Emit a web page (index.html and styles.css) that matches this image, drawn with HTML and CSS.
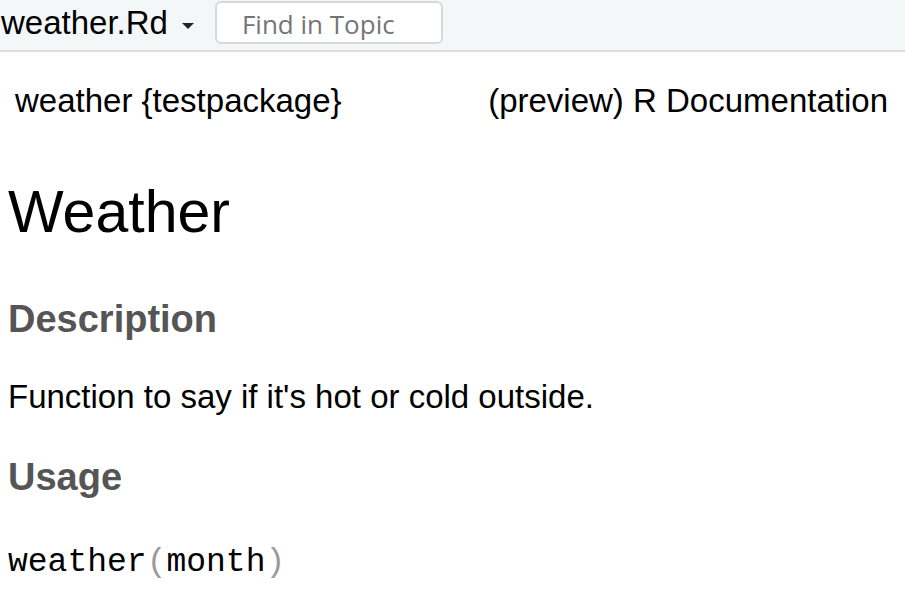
FILE: index.html
```html
<!DOCTYPE html>
<html>
<head>
<meta charset="utf-8">
<link rel="stylesheet" href="styles.css">
</head>
<body>
<div class="toolbar">
  <div class="topic">weather.Rd<span class="caret"></span></div>
  <div class="search">Find in Topic</div>
</div>
<div class="content">
  <div class="header">
    <span>weather {testpackage}</span>
    <span>(preview) R Documentation</span>
  </div>
  <h1>Weather</h1>
  <h3 class="desc">Description</h3>
  <p>Function to say if it's hot or cold outside.</p>
  <h3 class="usage">Usage</h3>
  <pre class="code">weather<span class="paren">(</span>month<span class="paren">)</span></pre>
</div>
</body>
</html>
```
FILE: styles.css
```css
html, body {
  margin: 0;
  padding: 0;
  background: #ffffff;
  font-family: "Liberation Sans", Arial, sans-serif;
  color: #000;
  overflow: hidden;
}
.toolbar {
  height: 50px;
  background: #f4f7f8;
  border-bottom: 2px solid #dcdfe1;
  display: flex;
  align-items: flex-start;
}
.topic {
  font-size: 33px;
  line-height: 38px;
  margin-top: 4px;
  padding-left: 1px;
  display: flex;
  align-items: flex-start;
}
.caret {
  display: block;
  width: 0;
  height: 0;
  border-left: 6px solid transparent;
  border-right: 6px solid transparent;
  border-top: 6px solid #222;
  margin-left: 14px;
  margin-top: 19px;
}
.search {
  margin-left: 21px;
  margin-top: 1px;
  width: 228px;
  height: 43px;
  background: #fff;
  border: 2px solid #d6d9db;
  border-radius: 6px;
  box-sizing: border-box;
  padding: 2px 0 0 25px;
  font-family: "Open Sans", "Noto Sans", sans-serif;
  font-size: 26px;
  color: #757575;
  line-height: 38px;
}
.content {
  padding: 0 8px;
}
.header {
  display: flex;
  justify-content: space-between;
  font-size: 33px;
  padding: 30px 9px 0 7px;
  line-height: 38px;
}
h1 {
  font-size: 59px;
  font-weight: normal;
  margin: 58px 0 0;
  line-height: 68px;
}
h3 {
  font-size: 38px;
  color: #555555;
  font-weight: bold;
  margin: 0;
  line-height: 44px;
}
h3.desc {
  margin-top: 51px;
}
p {
  font-size: 33px;
  line-height: 38px;
  margin: 37px 0 0;
}
h3.usage {
  margin-top: 39px;
}
.code {
  font-family: "Liberation Mono", "Courier New", monospace;
  font-size: 33px;
  line-height: 38px;
  margin: 45px 0 0;
}
.paren {
  color: #9a9a9a;
}
```
